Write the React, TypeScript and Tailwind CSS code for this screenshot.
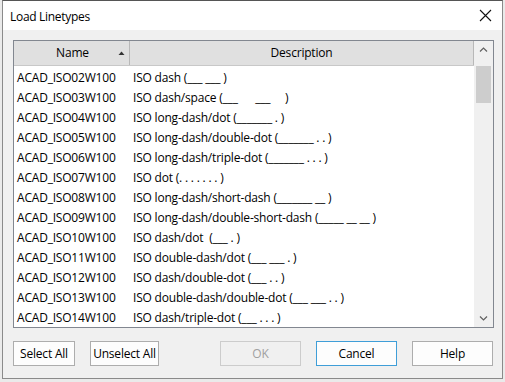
import React from "react";

const rows: [string, string][] = [
  ["ACAD_ISO02W100", "ISO dash (___ ___ )"],
  ["ACAD_ISO03W100", "ISO dash/space (___      ___     )"],
  ["ACAD_ISO04W100", "ISO long-dash/dot (_______ . )"],
  ["ACAD_ISO05W100", "ISO long-dash/double-dot (_______ . . )"],
  ["ACAD_ISO06W100", "ISO long-dash/triple-dot (_______ . . . )"],
  ["ACAD_ISO07W100", "ISO dot (. . . . . . . )"],
  ["ACAD_ISO08W100", "ISO long-dash/short-dash (_______ __ )"],
  ["ACAD_ISO09W100", "ISO long-dash/double-short-dash (_____ __ __ )"],
  ["ACAD_ISO10W100", "ISO dash/dot  (___ . )"],
  ["ACAD_ISO11W100", "ISO double-dash/dot (___ ___ . )"],
  ["ACAD_ISO12W100", "ISO dash/double-dot (___ . . )"],
  ["ACAD_ISO13W100", "ISO double-dash/double-dot (___ ___ . . )"],
  ["ACAD_ISO14W100", "ISO dash/triple-dot (___ . . . )"],
];

const Btn = ({label, w, disabled, focus}: {label: string; w: string; disabled?: boolean; focus?: boolean}) => (
  <button
    className={`${w} h-[25px] border ${focus ? "border-[#3f9ed8]" : disabled ? "border-[#cccccc]" : "border-[#adadad]"} ${disabled ? "bg-[#f0f0f0] text-[#a0a0a0]" : "bg-[#fdfdfd] text-black"} text-[12px] tracking-[-0.2px] flex items-center justify-center`}
  >
    {label}
  </button>
);

export default function App() {
  return (
    <div className="w-[505px] h-[382px] bg-[#eaeaea] pl-[2px] pr-[2px] pb-[3px] overflow-hidden" style={{fontFamily: "'Open Sans', 'Noto Sans', sans-serif"}}>
      <div className="h-full border border-[#8a8a8a] border-t-[#555] flex flex-col bg-[#f0f0f0]">
        <div className="h-[29px] bg-white flex items-center justify-between pl-[7px] pr-[10px] shrink-0">
          <span className="text-[12px] tracking-[-0.3px] text-black pt-[2px]">Load Linetypes</span>
          <svg width="13" height="13" viewBox="0 0 13 13">
            <path d="M1 1 L12 12 M12 1 L1 12" stroke="#111" strokeWidth="1.1" />
          </svg>
        </div>
        <div className="flex-1 flex flex-col pl-[10px] pr-[8px] pt-[10px]">
          <div className="h-[288px] border border-[#828790] bg-white flex">
            <div className="flex-1 flex flex-col">
              <div className="h-[25px] flex bg-[#e0e0e0] border-b border-[#c8c8c8] text-[12px] tracking-[-0.2px] text-black shrink-0">
                <div className="w-[116px] border-r border-[#b8b8b8] relative flex items-center justify-center">
                  <span className="pl-[2px]">Name</span>
                  <svg className="absolute right-[4px] top-[10px]" width="7" height="4" viewBox="0 0 7 4">
                    <path d="M0.5 4 L3.5 0.5 L6.5 4 Z" fill="#333" />
                  </svg>
                </div>
                <div className="flex-1 border-r border-[#b8b8b8] flex items-center justify-center">Description</div>
              </div>
              <div className="flex flex-col text-[12px] tracking-[-0.2px] text-black">
                {rows.map(([n, d]) => (
                  <div key={n} className="h-[20px] pt-[3px] flex items-center">
                    <div className="w-[116px] pl-[3px] whitespace-pre">{n}</div>
                    <div className="pl-[3px] whitespace-pre">{d}</div>
                  </div>
                ))}
              </div>
            </div>
            <div className="w-[19px] bg-[#f0f0f0] flex flex-col items-center">
              <div className="h-[17px] w-full flex items-center justify-center">
                <svg width="9" height="5" viewBox="0 0 9 5">
                  <path d="M1 4.5 L4.5 1 L8 4.5" stroke="#606060" strokeWidth="1.2" fill="none" />
                </svg>
              </div>
              <div className="w-[15px] h-[37px] bg-[#cdcdcd] mt-[8px]" />
              <div className="flex-1" />
              <div className="h-[17px] w-full flex items-center justify-center">
                <svg width="9" height="5" viewBox="0 0 9 5">
                  <path d="M1 0.5 L4.5 4 L8 0.5" stroke="#606060" strokeWidth="1.2" fill="none" />
                </svg>
              </div>
            </div>
          </div>
          <div className="flex mt-[13px]">
            <Btn label="Select All" w="w-[62px]" />
            <div className="w-[15px]" />
            <Btn label="Unselect All" w="w-[69px]" />
            <div className="w-[61px]" />
            <Btn label="OK" w="w-[81px]" disabled />
            <div className="w-[15px]" />
            <Btn label="Cancel" w="w-[81px]" focus />
            <div className="w-[15px]" />
            <Btn label="Help" w="w-[81px]" />
          </div>
        </div>
      </div>
    </div>
  );
}
